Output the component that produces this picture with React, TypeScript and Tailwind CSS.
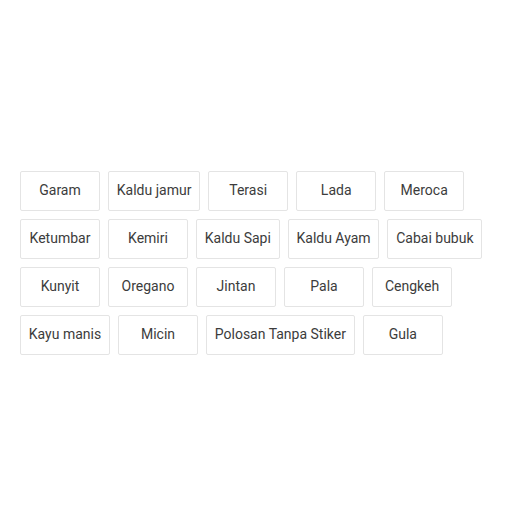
const items = [
  "Garam",
  "Kaldu jamur",
  "Terasi",
  "Lada",
  "Meroca",
  "Ketumbar",
  "Kemiri",
  "Kaldu Sapi",
  "Kaldu Ayam",
  "Cabai bubuk",
  "Kunyit",
  "Oregano",
  "Jintan",
  "Pala",
  "Cengkeh",
  "Kayu manis",
  "Micin",
  "Polosan Tanpa Stiker",
  "Gula",
];

export default function App() {
  return (
    <div className="min-h-[519px] bg-white px-5 pt-[171px] font-['Roboto',sans-serif]">
      <div className="flex flex-wrap gap-2">
        {items.map((item) => (
          <button
            key={item}
            className="h-10 min-w-20 rounded-[2px] border border-[#e4e4e4] bg-white px-[7.8px] pb-[2px] text-[14px] text-[#3c3c3c]"
          >
            {item}
          </button>
        ))}
      </div>
    </div>
  );
}
